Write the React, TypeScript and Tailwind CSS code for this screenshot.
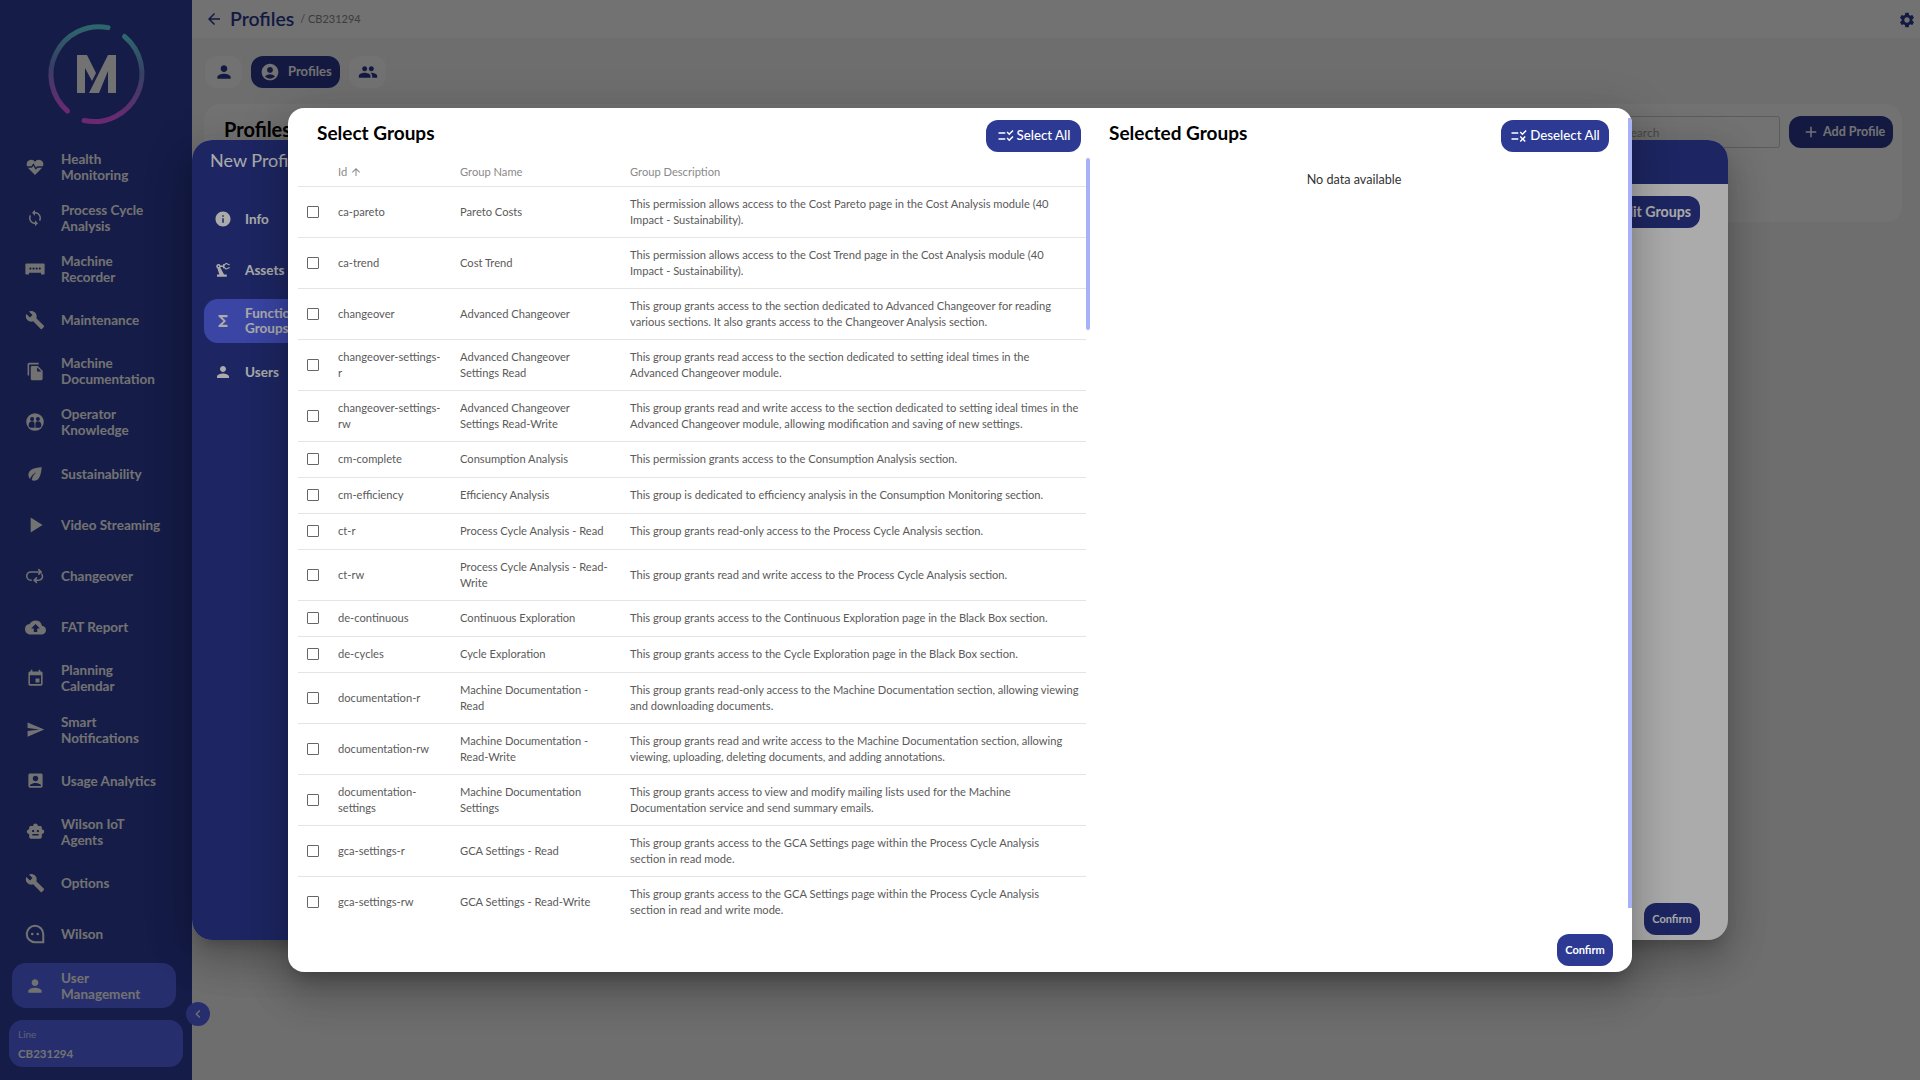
import {
  MdAccountBox, MdAccountCircle, MdAdd, MdArrowBack, MdArrowUpward, MdBuild, MdChecklistRtl, MdChevronLeft,
  MdCloudUpload, MdEco, MdEvent, MdFileCopy, MdFunctions, MdGroup, MdInfo, MdPerson,
  MdPlayArrow, MdPrecisionManufacturing, MdRule, MdSend, MdSettings, MdSmartToy, MdSync,
} from 'react-icons/md';

const font = { fontFamily: 'Lato, "Noto Sans", sans-serif' };

function WilsonIcon() {
  return (
    <svg width="22" height="22" viewBox="0 0 24 24" fill="none" stroke="currentColor" strokeWidth="2.2">
      <path d="M12 3a9 9 0 1 0 0 18h9v-9a9 9 0 0 0-9-9Z" />
      <circle cx="9" cy="12" r="1.4" fill="currentColor" stroke="none" />
      <circle cx="15" cy="12" r="1.4" fill="currentColor" stroke="none" />
    </svg>
  );
}

function HeartPulseIcon() {
  return (
    <svg width="20" height="20" viewBox="0 0 24 24">
      <path fill="currentColor" d="M12 21.5 3.4 13A6 6 0 0 1 2 9a5.5 5.5 0 0 1 10-3.2A5.5 5.5 0 0 1 22 9a6 6 0 0 1-1.4 4Z" />
      <path fill="none" stroke="#2f3fa0" strokeWidth="1.6" d="M2 12h6l2-3 3 5 2-2h7" />
    </svg>
  );
}

function RecorderIcon() {
  return (
    <svg width="22" height="22" viewBox="0 0 24 24">
      <path fill="currentColor" d="M2.5 6h19a1 1 0 0 1 1 1v10a1 1 0 0 1-1 1h-3v-2h-13v2h-3a1 1 0 0 1-1-1V7a1 1 0 0 1 1-1Z" />
      <g fill="#2f3fa0">
        <circle cx="7" cy="11.5" r="1.2" />
        <circle cx="10.4" cy="11.5" r="1.2" />
        <circle cx="13.8" cy="11.5" r="1.2" />
        <circle cx="17.2" cy="11.5" r="1.2" />
      </g>
    </svg>
  );
}

function KnowledgeIcon() {
  return (
    <svg width="20" height="20" viewBox="0 0 24 24">
      <circle cx="12" cy="12" r="10.5" fill="currentColor" />
      <g fill="#2f3fa0">
        <circle cx="8.5" cy="8.5" r="2.4" />
        <circle cx="15.5" cy="8.5" r="2.4" />
        <path d="M4.5 15c0-2.4 1.8-4 4-4s3 1.4 3 3.4V19H7a3 3 0 0 1-2.5-4Z" />
        <path d="M19.5 15c0-2.4-1.8-4-4-4s-3 1.4-3 3.4V19H17a3 3 0 0 0 2.5-4Z" />
      </g>
    </svg>
  );
}

function ChangeoverIcon() {
  return (
    <svg width="18" height="18" viewBox="0 0 24 24" fill="none" stroke="currentColor" strokeWidth="2" strokeLinecap="round" strokeLinejoin="round">
      <path d="M6 17.5H7a5 5 0 0 1-.5 0 5 5 0 0 1 0-11H20" />
      <path d="M17 3.5l3 3-3 3" />
      <path d="M11 17.5h6.5a5 5 0 0 0 3.5-8" />
      <path d="M14 14.5l-3 3 3 3" />
    </svg>
  );
}

const navItems = [
  { label: 'Health\nMonitoring', icon: <HeartPulseIcon /> },
  { label: 'Process Cycle\nAnalysis', icon: <MdSync size={18} /> },
  { label: 'Machine\nRecorder', icon: <RecorderIcon /> },
  { label: 'Maintenance', icon: <MdBuild size={20} /> },
  { label: 'Machine\nDocumentation', icon: <MdFileCopy size={19} /> },
  { label: 'Operator\nKnowledge', icon: <KnowledgeIcon /> },
  { label: 'Sustainability', icon: <MdEco size={20} /> },
  { label: 'Video Streaming', icon: <MdPlayArrow size={26} /> },
  { label: 'Changeover', icon: <ChangeoverIcon /> },
  { label: 'FAT Report', icon: <MdCloudUpload size={21} /> },
  { label: 'Planning\nCalendar', icon: <MdEvent size={19} /> },
  { label: 'Smart\nNotifications', icon: <MdSend size={19} /> },
  { label: 'Usage Analytics', icon: <MdAccountBox size={19} /> },
  { label: 'Wilson IoT\nAgents', icon: <MdSmartToy size={19} /> },
  { label: 'Options', icon: <MdBuild size={20} /> },
  { label: 'Wilson', icon: <WilsonIcon /> },
  { label: 'User\nManagement', icon: <MdPerson size={20} />, active: true },
];

const groups = [
  ['ca-pareto', 'Pareto Costs', 'This permission allows access to the Cost Pareto page in the Cost Analysis module (40\nImpact - Sustainability).'],
  ['ca-trend', 'Cost Trend', 'This permission allows access to the Cost Trend page in the Cost Analysis module (40\nImpact - Sustainability).'],
  ['changeover', 'Advanced Changeover', 'This group grants access to the section dedicated to Advanced Changeover for reading\nvarious sections. It also grants access to the Changeover Analysis section.'],
  ['changeover-settings-\nr', 'Advanced Changeover\nSettings Read', 'This group grants read access to the section dedicated to setting ideal times in the\nAdvanced Changeover module.'],
  ['changeover-settings-\nrw', 'Advanced Changeover\nSettings Read-Write', 'This group grants read and write access to the section dedicated to setting ideal times in the\nAdvanced Changeover module, allowing modification and saving of new settings.'],
  ['cm-complete', 'Consumption Analysis', 'This permission grants access to the Consumption Analysis section.'],
  ['cm-efficiency', 'Efficiency Analysis', 'This group is dedicated to efficiency analysis in the Consumption Monitoring section.'],
  ['ct-r', 'Process Cycle Analysis - Read', 'This group grants read-only access to the Process Cycle Analysis section.'],
  ['ct-rw', 'Process Cycle Analysis - Read-\nWrite', 'This group grants read and write access to the Process Cycle Analysis section.'],
  ['de-continuous', 'Continuous Exploration', 'This group grants access to the Continuous Exploration page in the Black Box section.'],
  ['de-cycles', 'Cycle Exploration', 'This group grants access to the Cycle Exploration page in the Black Box section.'],
  ['documentation-r', 'Machine Documentation -\nRead', 'This group grants read-only access to the Machine Documentation section, allowing viewing\nand downloading documents.'],
  ['documentation-rw', 'Machine Documentation -\nRead-Write', 'This group grants read and write access to the Machine Documentation section, allowing\nviewing, uploading, deleting documents, and adding annotations.'],
  ['documentation-\nsettings', 'Machine Documentation\nSettings', 'This group grants access to view and modify mailing lists used for the Machine\nDocumentation service and send summary emails.'],
  ['gca-settings-r', 'GCA Settings - Read', 'This group grants access to the GCA Settings page within the Process Cycle Analysis\nsection in read mode.'],
  ['gca-settings-rw', 'GCA Settings - Read-Write', 'This group grants access to the GCA Settings page within the Process Cycle Analysis\nsection in read and write mode.'],
];

function Logo() {
  return (
    <svg width="192" height="144" viewBox="0 0 192 144" className="block">
      <defs>
        <linearGradient id="ring" x1="0" y1="0" x2="0" y2="1">
          <stop offset="0" stopColor="#66e4f0" />
          <stop offset="0.45" stopColor="#7a8fe0" />
          <stop offset="1" stopColor="#f05cff" />
        </linearGradient>
      </defs>
      <path d="M67.5 111A48 48 0 0 1 108 27.6" fill="none" stroke="url(#ring)" strokeWidth="5" strokeLinecap="round" />
      <path d="M124.5 36.5A48 48 0 0 1 84 120.5" fill="none" stroke="url(#ring)" strokeWidth="5" strokeLinecap="round" />
      <polygon points="77,55 87,55 96,73 92,81 85,68 85,93 77,93" fill="#fff" />
      <polygon points="108,55 116,55 116,93 108,93 108,71 99,93 89,93" fill="#fff" />
    </svg>
  );
}

function Sidebar() {
  return (
    <aside className="w-[192px] h-full shrink-0 bg-[#2f3fa0] flex flex-col text-white">
      <Logo />
      <nav className="flex flex-col gap-[6.2px]">
        {navItems.map((item) => (
          <div
            key={item.label}
            className={`h-[45px] ml-3 mr-4 rounded-[14px] flex items-center text-[13.5px] leading-4 font-bold ${item.active ? 'bg-[#5767f5]' : ''}`}
          >
            <span className="w-[46px] flex justify-center shrink-0">{item.icon}</span>
            <span className="pl-[3px] whitespace-pre-line">{item.label}</span>
          </div>
        ))}
      </nav>
      <div className="mx-[9px] mt-[12px] h-[47px] rounded-[14px] bg-[#5767f5] px-[9px] pt-[6px]">
        <div className="text-[10px] leading-4 opacity-70">Line</div>
        <div className="text-[11.5px] leading-4 mt-[4px] font-bold">CB231294</div>
      </div>
    </aside>
  );
}

function Main() {
  return (
    <main className="flex-1 flex flex-col bg-[#f7f7f7]">
      <header className="h-[38px] bg-white flex items-center pl-[13px] pr-[4px] text-[#2c3a93]">
        <MdArrowBack size={18} />
        <span className="ml-[7px] text-[19.4px] font-semibold">Profiles</span>
        <span className="ml-[6px] text-[11px] text-[#888]">/ CB231294</span>
        <MdSettings size={18} className="ml-auto mt-[2px]" />
      </header>
      <div className="flex items-center gap-[9px] pl-[13px] mt-[18px] h-8">
        <div className="w-[37px] h-8 rounded-xl bg-[#fff] flex items-center justify-center text-[#2c3a93]"><MdPerson size={20} /></div>
        <div className="w-[89px] h-8 rounded-xl bg-[#2c3a93] flex items-center pl-[9px] gap-[8px] text-white text-[13px] font-bold">
          <MdAccountCircle size={20} />Profiles
        </div>
        <div className="w-[37px] h-8 rounded-xl bg-[#fff] flex items-center justify-center text-[#2c3a93]"><MdGroup size={20} /></div>
      </div>
      <section className="ml-[12px] mr-[18px] mt-4 h-[118px] rounded-2xl bg-white flex items-start pt-3 pl-5 pr-[9px]">
        <h2 className="text-[20px] font-bold text-black leading-6 mt-[1px]">Profiles</h2>
        <div className="ml-auto w-[160px] h-8 border border-[#ccc] rounded-[3px] text-[12px] text-[#aaa] pl-[3px] leading-8 mr-[9px]">Search</div>
        <button className="w-[104px] h-8 rounded-xl bg-[#2c3a93] text-white text-[12.5px] font-bold flex items-center pl-[13px] gap-[3px]">
          <MdAdd size={18} />Add Profile
        </button>
      </section>
    </main>
  );
}

const dialogShadow = 'shadow-[0_11px_15px_-7px_rgba(0,0,0,0.2),0_24px_38px_3px_rgba(0,0,0,0.14),0_9px_46px_8px_rgba(0,0,0,0.12)]';

function NewProfileDialog() {
  const items = [
    { label: 'Info', icon: <MdInfo size={18} /> },
    { label: 'Assets', icon: <MdPrecisionManufacturing size={18} /> },
    { label: 'Functional\nGroups', icon: <MdFunctions size={18} />, active: true },
    { label: 'Users', icon: <MdPerson size={18} /> },
  ];
  return (
    <div className={`absolute left-[192px] top-[140px] w-[1536px] h-[800px] rounded-[20px] overflow-hidden bg-white flex ${dialogShadow}`}>
      <div className="w-[240px] shrink-0 bg-[#2c3a93] text-white px-3">
        <div className="text-[18px] pl-[6px] pt-[8px] leading-6">New Profile</div>
        <div className="flex flex-col gap-[7px] mt-[25px]">
          {items.map((item) => (
            <div key={item.label} className={`h-[44px] rounded-[14px] flex items-center text-[13.5px] leading-[15px] font-bold ${item.active ? 'bg-[#5767f5]' : ''}`}>
              <span className="w-[41px] pr-[3px] flex justify-center shrink-0">{item.icon}</span>
              <span className="whitespace-pre-line">{item.label}</span>
            </div>
          ))}
        </div>
      </div>
      <div className="flex-1 flex flex-col">
        <div className="h-[44px] bg-[#2c3a93]" />
        <div className="flex justify-end pr-7 pt-3">
          <button className="w-[140px] h-8 rounded-xl bg-[#2c3a93] text-white text-[14.2px] font-bold text-right pr-[9px] pb-[1px]">Edit Groups</button>
        </div>
        <div className="mt-auto flex justify-end pr-7 pb-[5px]">
          <button className="w-[56px] h-8 rounded-xl bg-[#2c3a93] text-white text-[11px] font-bold">Confirm</button>
        </div>
      </div>
    </div>
  );
}

function SelectGroupsDialog() {
  return (
    <div className={`absolute left-[288px] top-[108px] w-[1344px] h-[864px] rounded-[16px] overflow-hidden bg-white flex flex-col ${dialogShadow}`}>
      <div className="h-[819px] flex">
        <div className="w-[802px] shrink-0 pl-[10px] flex flex-col">
          <div className="h-[50px] shrink-0 flex items-start pt-3 pl-[19px] pr-[9px]">
            <h2 className="text-[19px] leading-[26px] font-bold text-black">Select Groups</h2>
            <button className="ml-auto w-[95px] h-8 rounded-xl bg-[#2c3a93] text-white text-[13.3px] font-medium flex items-center justify-center gap-[2px]">
              <MdChecklistRtl size={18} />Select All
            </button>
          </div>
          <div className="relative flex-1 overflow-hidden">
            <table className="w-[788px] table-fixed border-collapse text-[11.15px] leading-4 text-[#5a5a5a]">
              <colgroup>
                <col className="w-[30px]" />
                <col className="w-[122px]" />
                <col className="w-[170px]" />
                <col />
              </colgroup>
              <thead>
                <tr className="h-[28px] border-b border-[#e4e4e4] text-[#8a8a8a] text-left">
                  <th />
                  <th className="font-normal pl-[10px]"><span className="inline-flex items-center gap-[3px]">Id<MdArrowUpward size={12} /></span></th>
                  <th className="font-normal pl-[10px]">Group Name</th>
                  <th className="font-normal pl-[10px]">Group Description</th>
                </tr>
              </thead>
              <tbody>
                {groups.map(([id, name, description], i) => {
                  const tall = [id, name, description].some((t) => t.includes('\n'));
                  return (
                    <tr key={id} className={`${tall ? 'h-[51px]' : 'h-[36px]'} ${i < groups.length - 1 ? 'border-b border-[#e4e4e4]' : ''}`}>
                      <td className="pl-[9px]"><span className="block w-3 h-3 border border-[#666] rounded-[1px] bg-white" /></td>
                      <td className="pl-[10px] whitespace-pre">{id}</td>
                      <td className="pl-[10px] whitespace-pre">{name}</td>
                      <td className="pl-[10px] whitespace-pre">{description}</td>
                    </tr>
                  );
                })}
              </tbody>
            </table>
            <div className="absolute right-0 top-0 w-1 h-[172px] rounded-[2px] bg-[#a8b1f5]" />
          </div>
        </div>
        <div className="flex-1 flex flex-col">
          <div className="h-[50px] shrink-0 flex items-start pt-3 pl-[19px] pr-[23px]">
            <h2 className="text-[19px] leading-[26px] font-bold text-black">Selected Groups</h2>
            <button className="ml-auto w-[108px] h-8 rounded-xl bg-[#2c3a93] text-white text-[13.3px] font-medium flex items-center justify-center gap-[2px]">
              <MdRule size={18} />Deselect All
            </button>
          </div>
          <div className="text-center text-[12.6px] leading-4 text-[#333] mt-[14px] pr-[14px]">No data available</div>
        </div>
      </div>
      <div className="flex-1 flex justify-end items-start pt-[7px] pr-[19px]">
        <button className="w-[56px] h-8 rounded-xl bg-[#2c3a93] text-white text-[11px] font-bold">Confirm</button>
      </div>
      <div className="absolute right-0 top-[10px] w-1 h-[790px] bg-[#a8b1f5]" />
    </div>
  );
}

export default function App() {
  return (
    <div className="relative w-[1920px] h-[1080px] overflow-hidden flex" style={font}>
      <Sidebar />
      <Main />
      <button className="absolute left-[186px] top-[1002px] w-6 h-6 rounded-full bg-[#5767f5] text-white flex items-center justify-center">
        <MdChevronLeft size={16} />
      </button>
      <div className="absolute inset-0 bg-black/[0.33]" />
      <NewProfileDialog />
      <div className="absolute inset-0 bg-black/[0.33]" />
      <SelectGroupsDialog />
    </div>
  );
}
